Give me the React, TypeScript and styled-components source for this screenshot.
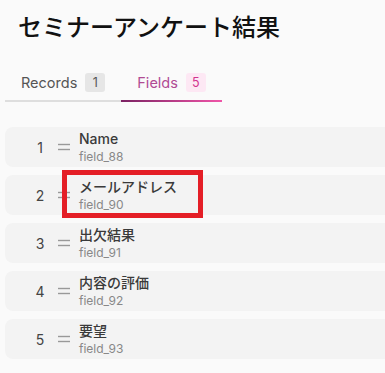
import React from "react";
import styled, { createGlobalStyle } from "styled-components";

const GlobalStyle = createGlobalStyle`
  html, body {
    margin: 0;
    padding: 0;
    background-color: #fafafa;
    overflow: hidden;
  }
  body {
    font-family: Inter, "Noto Sans CJK JP", sans-serif;
  }
`;

const Page = styled.div`
  width: 385px;
  height: 373px;
  overflow: hidden;
  padding: 0 0 0 5px;
  box-sizing: border-box;
`;

const Title = styled.h1`
  margin: 0;
  padding: 10px 0 0 13px;
  font-size: 24px;
  line-height: 32px;
  font-weight: 500;
  color: #111;
  font-family: "Noto Sans CJK JP", sans-serif;
`;

const TabBar = styled.div`
  display: flex;
  margin-top: 22px;
`;

const Tab = styled.div<{ $active?: boolean }>`
  position: relative;
  display: flex;
  align-items: center;
  gap: 8px;
  height: 36px;
  padding: 0 16px;
  border-bottom: 2px solid #dedede;
  font-size: 14.5px;
  color: ${(p) => (p.$active ? "#b04b94" : "#555")};

  &::after {
    content: "";
    display: ${(p) => (p.$active ? "block" : "none")};
    position: absolute;
    left: 0;
    right: 0;
    bottom: -2px;
    height: 2px;
    background: linear-gradient(90deg, #7b2263, #f055a8);
  }
`;

const Badge = styled.span<{ $active?: boolean }>`
  display: inline-flex;
  align-items: center;
  justify-content: center;
  width: 20px;
  height: 19px;
  border-radius: 3px;
  font-size: 12.5px;
  background-color: ${(p) => (p.$active ? "#fde8f4" : "#e6e6e6")};
  color: ${(p) => (p.$active ? "#d3338f" : "#555")};
`;

const List = styled.div`
  display: flex;
  flex-direction: column;
  gap: 8px;
  margin-top: 25px;
  width: 420px;
`;

const Row = styled.div`
  position: relative;
  display: flex;
  align-items: center;
  height: 40px;
  border-radius: 8px;
  background-color: #f3f3f3;
`;

const Index = styled.span`
  width: 30px;
  margin-left: 20px;
  text-align: center;
  font-size: 14px;
  color: #444;
`;

const Handle = styled.svg`
  margin: 0 9px 0 3px;
  flex-shrink: 0;
`;

const Info = styled.div`
  display: flex;
  flex-direction: column;
`;

const Name = styled.span`
  font-size: 14px;
  line-height: 18px;
  font-weight: 500;
  color: #3a3a3a;
`;

const Key = styled.span`
  font-size: 12px;
  line-height: 17px;
  color: #888;
`;

// red annotation box drawn over the second row
const Highlight = styled.div`
  position: absolute;
  left: 57px;
  top: -5px;
  width: 141px;
  height: 48px;
  border: 5px solid #e41e26;
  box-sizing: border-box;
  pointer-events: none;
`;

const fields = [
  { name: "Name", key: "field_88" },
  { name: "メールアドレス", key: "field_90" },
  { name: "出欠結果", key: "field_91" },
  { name: "内容の評価", key: "field_92" },
  { name: "要望", key: "field_93" },
];

const App = () => {
  return (
    <Page>
      <GlobalStyle />
      <Title>セミナーアンケート結果</Title>
      <TabBar>
        <Tab>
          Records <Badge>1</Badge>
        </Tab>
        <Tab $active>
          Fields <Badge $active>5</Badge>
        </Tab>
      </TabBar>
      <List>
        {fields.map((f, i) => (
          <Row key={f.key}>
            <Index>{i + 1}</Index>
            <Handle width="12" height="8" viewBox="0 0 12 8">
              <line x1="0" y1="1.5" x2="12" y2="1.5" stroke="#999" strokeWidth="1.4" />
              <line x1="0" y1="6.5" x2="12" y2="6.5" stroke="#999" strokeWidth="1.4" />
            </Handle>
            <Info>
              <Name lang="ja">{f.name}</Name>
              <Key>{f.key}</Key>
            </Info>
            {i === 1 && <Highlight />}
          </Row>
        ))}
      </List>
    </Page>
  );
};

export default App;
